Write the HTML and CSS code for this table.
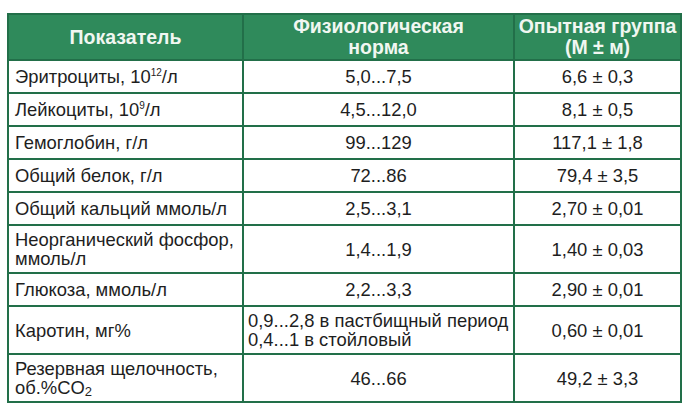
FILE: index.html
```html
<!DOCTYPE html>
<html lang="ru">
<head>
<meta charset="utf-8">
<link rel="stylesheet" href="styles.css">
</head>
<body>
<table class="grid">
  <colgroup>
    <col class="c1">
    <col class="c2">
    <col class="c3">
  </colgroup>
  <thead>
    <tr class="rh">
      <th>Показатель</th>
      <th>Физиологическая<br>норма</th>
      <th>Опытная группа<br>(М ± м)</th>
    </tr>
  </thead>
  <tbody>
    <tr class="r1"><td class="name">Эритроциты, 10<sup>12</sup>/л</td><td>5,0...7,5</td><td>6,6 ± 0,3</td></tr>
    <tr class="r1"><td class="name">Лейкоциты, 10<sup>9</sup>/л</td><td>4,5...12,0</td><td>8,1 ± 0,5</td></tr>
    <tr class="r1"><td class="name">Гемоглобин, г/л</td><td>99...129</td><td>117,1 ± 1,8</td></tr>
    <tr class="r1"><td class="name">Общий белок, г/л</td><td>72...86</td><td>79,4 ± 3,5</td></tr>
    <tr class="r1"><td class="name">Общий кальций ммоль/л</td><td>2,5...3,1</td><td>2,70 ± 0,01</td></tr>
    <tr class="r2"><td class="name">Неорганический фосфор,<br>ммоль/л</td><td>1,4...1,9</td><td>1,40 ± 0,03</td></tr>
    <tr class="r1"><td class="name">Глюкоза, ммоль/л</td><td>2,2...3,3</td><td>2,90 ± 0,01</td></tr>
    <tr class="r2"><td class="name">Каротин, мг%</td><td class="left">0,9...2,8 в пастбищный период<br>0,4...1 в стойловый</td><td>0,60 ± 0,01</td></tr>
    <tr class="r2 last"><td class="name">Резервная щелочность,<br>об.%CO<sub>2</sub></td><td>46...66</td><td>49,2 ± 3,3</td></tr>
  </tbody>
</table>
</body>
</html>
```

FILE: styles.css
```css
html, body {
  margin: 0;
  padding: 0;
  background: #ffffff;
}

body {
  padding: 13px 0 0 7px;
  font-family: "Liberation Sans", Arial, sans-serif;
  color: #1e1e1e;
}

.grid {
  width: 673px;
  table-layout: fixed;
  border-collapse: separate;
  border-spacing: 0;
  border-top: 2px solid #226f49;
  border-left: 2px solid #226f49;
}

.c1 { width: 235px; }
.c2 { width: 271px; }
.c3 { width: 167px; }

.grid th,
.grid td {
  border-right: 2px solid #226f49;
  border-bottom: 2px solid #226f49;
  padding: 0;
  text-align: center;
  vertical-align: middle;
  font-size: 18.4px;
  line-height: 19px;
}

.grid th {
  background: #2f8a5b;
  color: #f1f7f1;
  font-weight: bold;
  font-size: 19.5px;
  line-height: 21px;
}

.rh { height: 46px; }
.r1 { height: 33px; }
.r2 { height: 48px; }

.grid td.name {
  text-align: left;
  padding-left: 6px;
}

.grid td.left {
  text-align: left;
  padding-left: 4px;
}

sup {
  font-size: 10px;
  vertical-align: 7px;
  line-height: 0;
}

sub {
  font-size: 13px;
  vertical-align: -2px;
  line-height: 0;
}
```
